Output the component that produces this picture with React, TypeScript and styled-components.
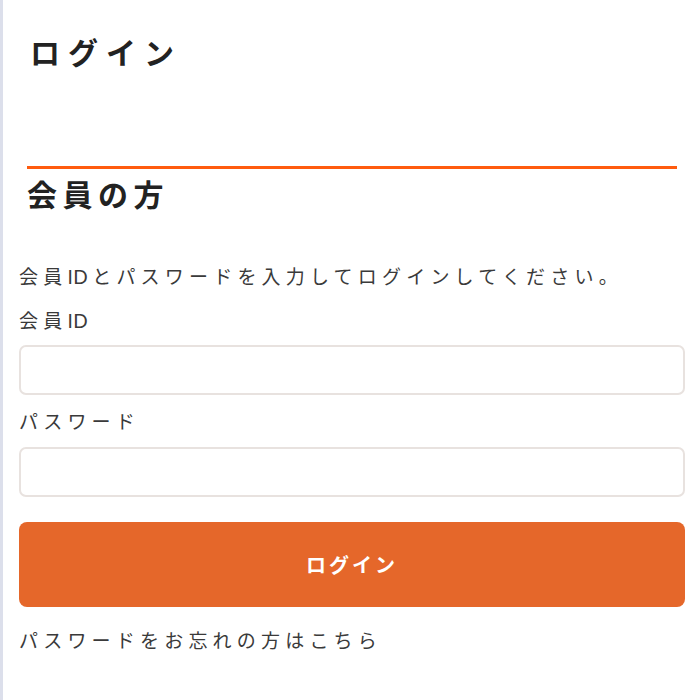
import styled, {createGlobalStyle} from "styled-components";

const GlobalStyle = createGlobalStyle`
  body {
    margin: 0;
    background: #ffffff;
    font-family: Lato, "Noto Sans CJK JP", sans-serif;
  }
`;

const Page = styled.div`
  min-height: 700px;
  box-sizing: border-box;
  border-left: 3px solid #dcdfeb;
  padding: 30px 15px 0 16px;
  color: #3a3a3a;
`;

const PageTitle = styled.h1`
  margin: 0 0 91px;
  padding-left: 11px;
  font-size: 30px;
  line-height: 45px;
  font-weight: 700;
  letter-spacing: 8px;
  color: #222222;
`;

const SectionTitle = styled.h2`
  margin: 0 8px;
  padding-top: 4px;
  border-top: 3px solid #ff5b0e;
  font-size: 30px;
  line-height: 42px;
  font-weight: 700;
  letter-spacing: 5.5px;
  color: #222222;
`;

const LoginForm = styled.form`
  display: flex;
  flex-direction: column;
  margin-top: 47px;
`;

const Text = styled.p<{ gap?: number }>`
  margin: 0 0 ${props => props.gap ?? 0}px;
  font-size: 19px;
  line-height: 30px;
  letter-spacing: 5.2px;
`;

// latin runs sit tighter than the kana around them
const Latin = styled.span`
  letter-spacing: 0.5px;
  margin-right: 4px;
`;

const Label = styled.label<{ gap?: number }>`
  display: block;
  margin-bottom: ${props => props.gap ?? 9}px;
  font-size: 19px;
  line-height: 30px;
  letter-spacing: 5.2px;
`;

const Field = styled.input`
  box-sizing: border-box;
  width: 100%;
  height: 50px;
  margin: 0 0 12px;
  padding: 0 12px;
  border: 2px solid #e8e2df;
  border-radius: 7px;
  background: #ffffff;
  font-size: 18px;
  outline: none;
`;

const SubmitButton = styled.button`
  box-sizing: border-box;
  width: 100%;
  height: 85px;
  margin-top: 13px;
  border: 0;
  border-radius: 8px;
  background: #e5672a;
  color: #ffffff;
  font-family: Lato, "Noto Sans CJK JP", sans-serif;
  font-size: 20px;
  font-weight: 700;
  letter-spacing: 3px;
  cursor: pointer;
`;

const ForgotLink = styled.a`
  display: block;
  margin-top: 19px;
  font-size: 19px;
  line-height: 30px;
  letter-spacing: 5.2px;
  color: #3a3a3a;
  text-decoration: none;
`;

export default function App() {
  return (
    <>
      <GlobalStyle/>
      <Page>
        <PageTitle>ログイン</PageTitle>
        <SectionTitle>会員の方</SectionTitle>
        <LoginForm onSubmit={e => e.preventDefault()}>
          <Text gap={14}>会員<Latin>ID</Latin>とパスワードを入力してログインしてください。</Text>
          <Label htmlFor="member-id">会員<Latin>ID</Latin></Label>
          <Field id="member-id" type="text"/>
          <Label htmlFor="password" gap={10}>パスワード</Label>
          <Field id="password" type="password"/>
          <SubmitButton type="submit">ログイン</SubmitButton>
          <ForgotLink href="#">パスワードをお忘れの方はこちら</ForgotLink>
        </LoginForm>
      </Page>
    </>
  );
}
